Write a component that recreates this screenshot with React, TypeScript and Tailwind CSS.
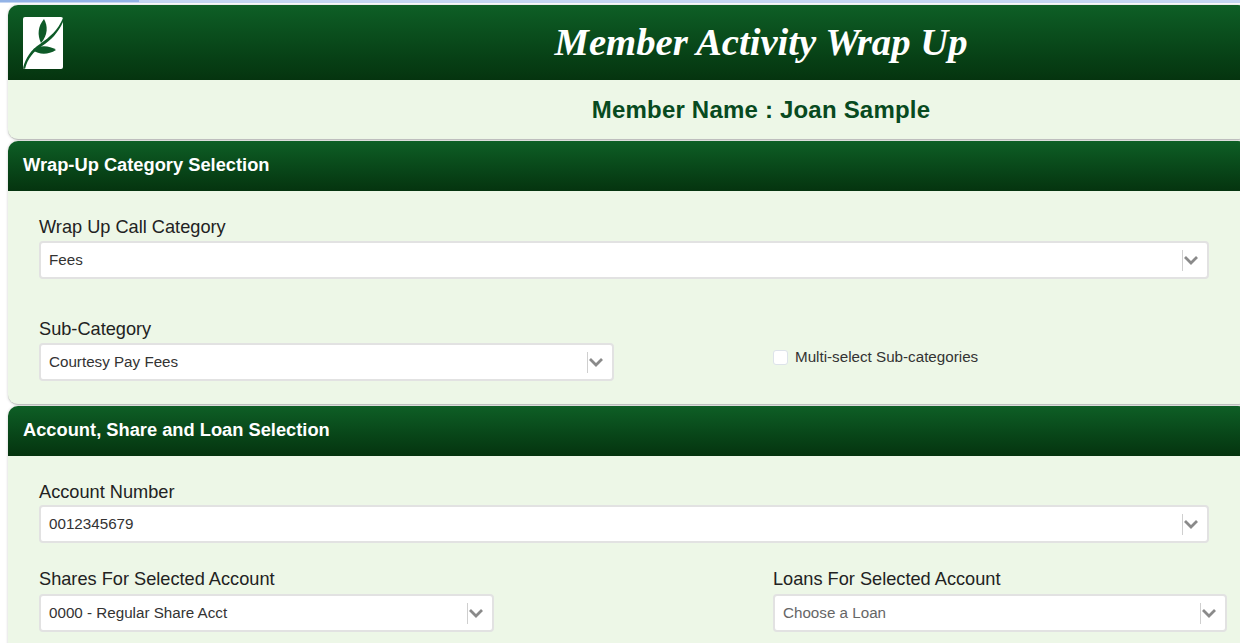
import type { ReactNode } from "react";

const sans = "font-['Liberation_Sans',Arial,sans-serif]";

function SelectBox({ value, placeholder = false }: { value: string; placeholder?: boolean }) {
  return (
    <div className="flex h-[38px] items-center rounded-[4px] border-2 border-[#e2e2e2] bg-white pl-2 pr-[9px] pt-px">
      <span className={`flex-1 text-[15.2px] ${placeholder ? "text-[#666]" : "text-[#333]"}`}>{value}</span>
      <span className="h-[21px] w-px bg-[#cfcfcf]" />
      <svg viewBox="0 0 14 9" className="ml-px h-[9px] w-[14px]" fill="none" stroke="#8a8a8a" strokeWidth="2.8">
        <path d="M1 1 L7 7 L13 1" />
      </svg>
    </div>
  );
}

function Field({ label, value, placeholder, gap = "mb-[3px]", className = "" }: { label: string; value: string; placeholder?: boolean; gap?: string; className?: string }) {
  return (
    <div className={className}>
      <div className={`${gap} text-[18.2px] leading-[21px] text-[#222]`}>{label}</div>
      <SelectBox value={value} placeholder={placeholder} />
    </div>
  );
}

function Panel({ title, children }: { title: string; children: ReactNode }) {
  return (
    <section className="rounded-[10px] border-b border-[#c4c4c4] bg-[#edf7e7] shadow-[0_0_3px_rgba(0,0,0,0.2)]">
      <div className="flex h-[50px] items-center rounded-t-[10px] bg-gradient-to-b from-[#0e5f26] to-[#05340f] pb-0.5 pl-[15px] text-[18.3px] font-bold text-white">
        {title}
      </div>
      {children}
    </section>
  );
}

export default function App() {
  return (
    <div className={`h-[643px] w-[1240px] overflow-hidden bg-white ${sans}`}>
      <div className="h-[3px] bg-[#c5d6f2]">
        <div className="h-[2px] w-[139px] bg-[#93b3e6]" />
      </div>
      <div className="ml-2 mt-[2px] w-[1240px]">
        <section className="rounded-[10px] border-b border-[#c4c4c4] bg-[#edf7e7] shadow-[0_0_3px_rgba(0,0,0,0.2)]">
          <div className="flex h-[75px] items-center rounded-t-[10px] bg-gradient-to-b from-[#0e5f26] to-[#05340f] pl-[15px]">
            <svg viewBox="0 0 40 52" className="h-[52px] w-[40px] shrink-0 rounded-[2px] bg-white">
              <path d="M0 51 C3 40 8 33 17 27 C27 20 35 13 40 1 L40 5 C35 16 28 23 19 29 C10 35 5 41 2 52 Z" fill="#0e5a28" />
              <path d="M21 2 C25 9 25 18 18 26 C14 18 15 9 21 2 Z" fill="#0e5a28" />
              <path d="M10 33 C16 28 26 28 33 33 C25 38 16 38 10 33 Z" fill="#0e5a28" />
            </svg>
            <h1 className="flex-1 pl-[211px] text-center font-['Liberation_Serif',cursive] text-[38.7px] font-bold italic text-white">
              Member Activity Wrap Up
            </h1>
          </div>
          <div className="flex h-[59px] items-center justify-center pl-[266px] pt-px text-[24px] font-bold tracking-[0.2px] text-[#074a20]">
            Member Name : Joan Sample
          </div>
        </section>

        <div className="mt-px">
          <Panel title="Wrap-Up Category Selection">
            <div className="h-[213px] pl-[31px] pt-[26px]">
              <Field label="Wrap Up Call Category" value="Fees" className="w-[1170px]" />
              <div className="mt-10 flex">
                <Field label="Sub-Category" value="Courtesy Pay Fees" className="w-[575px]" />
                <label className="ml-[159px] mt-7 flex h-5 items-center text-[15.2px] text-[#333]">
                  <span className="mr-[7px] h-[15px] w-[15px] rounded-[3px] border border-[#dde3ea] bg-white" />
                  Multi-select Sub-categories
                </label>
              </div>
            </div>
          </Panel>
        </div>

        <div className="mt-px">
          <Panel title="Account, Share and Loan Selection">
            <div className="h-[220px] pl-[31px] pt-[26px]">
              <Field label="Account Number" value="0012345679" gap="mb-[2px]" className="w-[1170px]" />
              <div className="mt-[26px] flex">
                <Field label="Shares For Selected Account" value="0000 - Regular Share Acct" gap="mb-1" className="w-[455px]" />
                <Field label="Loans For Selected Account" value="Choose a Loan" placeholder gap="mb-1" className="ml-[279px] w-[454px]" />
              </div>
            </div>
          </Panel>
        </div>
      </div>
    </div>
  );
}
